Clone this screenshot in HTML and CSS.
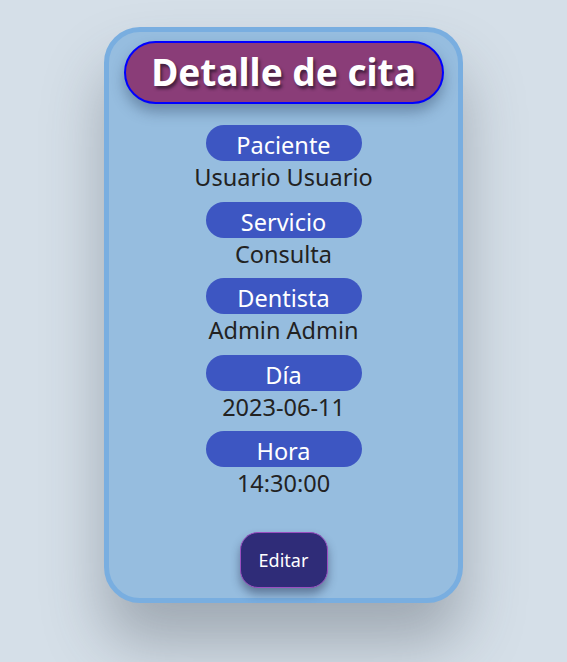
FILE: index.html
```html
<!DOCTYPE html>
<html lang="es">
<head>
<meta charset="utf-8">
<title>Detalle de cita</title>
<link rel="stylesheet" href="styles.css">
</head>
<body>
<main class="page">
  <section class="card">
    <h1 class="title">Detalle de cita</h1>
    <div class="field">
      <div class="label">Paciente</div>
      <div class="value">Usuario Usuario</div>
    </div>
    <div class="field">
      <div class="label">Servicio</div>
      <div class="value">Consulta</div>
    </div>
    <div class="field">
      <div class="label">Dentista</div>
      <div class="value">Admin Admin</div>
    </div>
    <div class="field">
      <div class="label">Día</div>
      <div class="value">2023-06-11</div>
    </div>
    <div class="field">
      <div class="label">Hora</div>
      <div class="value">14:30:00</div>
    </div>
    <button class="edit">Editar</button>
  </section>
</main>
</body>
</html>
```
FILE: styles.css
```css
html, body {
  margin: 0;
  padding: 0;
}
body {
  background: #d5dfe8;
  font-family: "Noto Sans", "Open Sans", sans-serif;
  width: 567px;
  height: 662px;
  overflow: hidden;
}
.page {
  display: flex;
  justify-content: center;
  padding-top: 27px;
}
.card {
  box-sizing: border-box;
  width: 359px;
  height: 576px;
  border: 5px solid #79aee0;
  border-radius: 36px;
  background: #96bddf;
  box-shadow: 0 40px 60px rgba(60, 70, 80, 0.35);
  display: flex;
  flex-direction: column;
  align-items: center;
  padding: 9px 15px 9px;
}
.title {
  box-sizing: border-box;
  width: 320px;
  height: 63px;
  margin: 0 0 21px;
  background: #8a3d78;
  border: 2px solid #0000ff;
  border-radius: 32px;
  color: #fff;
  font-size: 37px;
  font-weight: 700;
  line-height: 58px;
  text-align: center;
  text-shadow: 2px 3px 3px rgba(40, 20, 40, 0.7);
  box-shadow: 0 8px 14px rgba(40, 60, 90, 0.4);
}
.field {
  display: flex;
  flex-direction: column;
  align-items: center;
  margin-bottom: 8.5px;
}
.label {
  width: 156px;
  height: 36px;
  border-radius: 18px;
  background: #3d56c2;
  color: #fff;
  font-size: 23.5px;
  line-height: 41px;
  text-align: center;
}
.value {
  color: #222;
  font-size: 23.5px;
  line-height: 32px;
  text-align: center;
}
.edit {
  margin-top: 24px;
  width: 88px;
  height: 56px;
  border-radius: 18px;
  border: 1px solid #9b4fc0;
  background: #2f2c78;
  color: #fff;
  font-family: inherit;
  font-size: 18px;
  box-shadow: 0 6px 10px rgba(30, 40, 70, 0.45);
  padding: 0;
}
```
